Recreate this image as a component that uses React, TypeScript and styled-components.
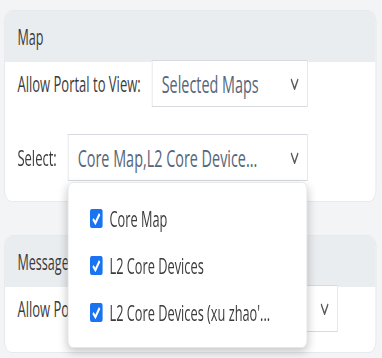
import styled, { createGlobalStyle } from 'styled-components';

const GlobalStyle = createGlobalStyle`
  html, body {
    margin: 0;
    padding: 0;
    background: #f3f4f6;
    overflow: hidden;
  }
  body {
    font-family: "Open Sans", "DejaVu Sans", sans-serif;
    color: #3b3b3b;
  }
`;

// the whole page is drawn narrow, like the reference
const Page = styled.div`
  width: 637px;
  height: 358px;
  box-sizing: border-box;
  padding: 10px 0 0 7px;
  display: flex;
  flex-direction: column;
  gap: 33px;
  transform: scaleX(0.6);
  transform-origin: 0 0;
`;

const Card = styled.section<{ $front?: boolean }>`
  position: relative;
  z-index: ${(p) => (p.$front ? 2 : 1)};
  width: 620px;
  box-sizing: border-box;
  background: #fff;
  border: 1px solid #e2e5e9;
  border-radius: 12px;
`;

const CardHeader = styled.header`
  height: 51px;
  display: flex;
  align-items: center;
  padding-left: 21px;
  background: #eaedf0;
  border-radius: 11px 11px 0 0;
  font-size: 21px;
  color: #3b3b3b;
`;

const CardBody = styled.div`
  margin-top: -2px;
  padding: 0 0 20px 21px;
  display: flex;
  flex-direction: column;
  gap: 27px;
`;

const Row = styled.div`
  display: flex;
  align-items: center;
  gap: 18px;
`;

const Label = styled.span`
  font-size: 21.7px;
  color: #3b3b3b;
  white-space: nowrap;
`;

const SelectWrap = styled.div`
  position: relative;
`;

const Select = styled.div<{ $width: number }>`
  width: ${(p) => p.$width}px;
  height: 47px;
  box-sizing: border-box;
  display: flex;
  align-items: center;
  justify-content: space-between;
  padding: 0 14px 0 16px;
  background: #fff;
  border: 1px solid #d6dade;
  font-size: 24px;
  color: #56667a;
  white-space: nowrap;
`;

const Chevron = () => (
  <svg width="14" height="12" viewBox="0 0 14 12">
    <path d="M1.2 1 L7 11 L12.8 1" fill="none" stroke="#5a5a5a" strokeWidth="2.2" />
  </svg>
);

const Menu = styled.ul`
  position: absolute;
  top: 48px;
  left: 0;
  width: 399px;
  height: 166px;
  box-sizing: border-box;
  margin: 0;
  padding: 12px 0 0 36px;
  list-style: none;
  background: #fff;
  border: 1px solid #e3e6e9;
  border-radius: 8px;
  box-shadow: 0 4px 12px rgba(0, 0, 0, 0.22);
  display: flex;
  flex-direction: column;
`;

const MenuItem = styled.li`
  height: 47px;
  display: flex;
  align-items: center;
  gap: 12px;
  font-size: 21.3px;
  color: #3b3b3b;
  white-space: nowrap;
`;

const Check = styled.span`
  width: 21px;
  height: 19px;
  border-radius: 3px;
  background: #1a73f0;
  display: flex;
  align-items: center;
  justify-content: center;
`;

const CheckBox = () => (
  <Check>
    <svg width="15" height="13" viewBox="0 0 15 13">
      <path d="M2 7 L6 11 L13 2" fill="none" stroke="#fff" strokeWidth="3" />
    </svg>
  </Check>
);

const maps = ['Core Map', 'L2 Core Devices', "L2 Core Devices (xu zhao'..."];

export default function App() {
  return (
    <>
      <GlobalStyle />
      <Page>
        <Card $front>
          <CardHeader>Map</CardHeader>
          <CardBody>
            <Row>
              <Label>Allow Portal to View:</Label>
              <Select $width={260}>
                Selected Maps
                <Chevron />
              </Select>
            </Row>
            <Row>
              <Label>Select:</Label>
              <SelectWrap>
                <Select $width={400}>
                  Core Map,L2 Core Device...
                  <Chevron />
                </Select>
                <Menu>
                  {maps.map((m) => (
                    <MenuItem key={m}>
                      <CheckBox />
                      {m}
                    </MenuItem>
                  ))}
                </Menu>
              </SelectWrap>
            </Row>
          </CardBody>
        </Card>
        <Card>
          <CardHeader>Message</CardHeader>
          <CardBody>
            <Row>
              <Label>Allow Portal to Message:</Label>
              <Select $width={270}>
                Selected Maps
                <Chevron />
              </Select>
            </Row>
          </CardBody>
        </Card>
      </Page>
    </>
  );
}
